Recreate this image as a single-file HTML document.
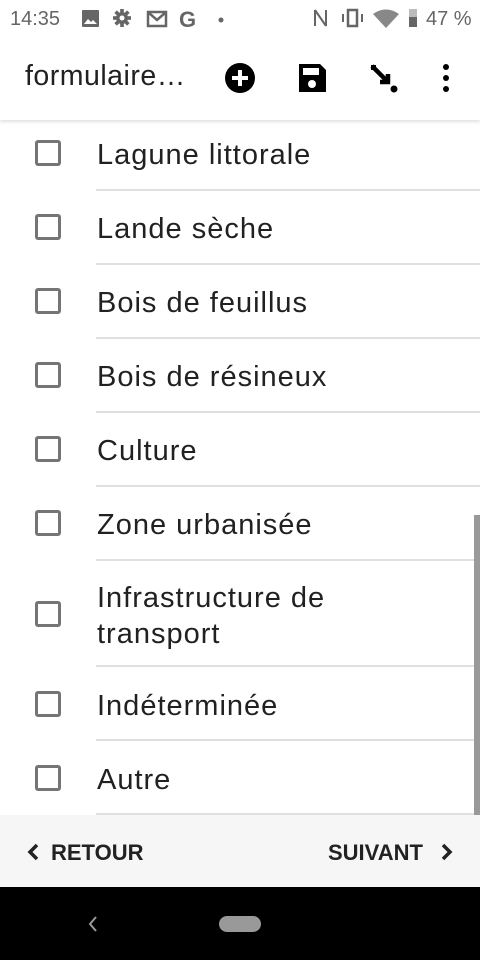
<!DOCTYPE html>
<html><head><meta charset="utf-8"><style>
*{margin:0;padding:0;box-sizing:border-box}
body{width:480px;height:960px;overflow:hidden;background:#fff;font-family:"Liberation Sans",Roboto,sans-serif;position:relative}
.sb{position:absolute;top:0;left:0;width:480px;height:38px;color:#666;font-size:20px}
.tb{position:absolute;top:38px;left:0;width:480px;height:82px;background:#fff;box-shadow:0 2px 3px rgba(0,0,0,.12);z-index:2}
.title{position:absolute;left:25px;top:22px;font-size:28.5px;color:#212121;letter-spacing:0.5px}
.cb{position:absolute;left:35px;width:26px;height:26px;border:3px solid #757575;border-radius:3px}
.txt{position:absolute;left:97px;font-size:29px;color:#212121;line-height:36px;white-space:nowrap;letter-spacing:1px}
.div{position:absolute;left:96px;right:0;height:2px;background:#e0e0e0}
.bot{position:absolute;top:815px;left:0;width:480px;height:72px;background:#f6f6f6;font-weight:bold;font-size:22px;color:#222}
.nav{position:absolute;top:887px;left:0;width:480px;height:73px;background:#000}
</style></head><body>
<div class="sb">
<span style="position:absolute;left:10px;top:8px">14:35</span>
<svg style="position:absolute;left:80px;top:9px" width="150" height="20">
<rect x="2" y="1" width="17" height="17" rx="1" fill="#666"/><path d="M4 15l4-5 3 3 2-2 4 4z" fill="#fff"/>
<g transform="translate(42,9)" fill="#666"><circle r="6"/><rect x="-1.8" y="-9" width="3.6" height="18"/><rect x="-9" y="-1.8" width="18" height="3.6"/><rect x="-1.8" y="-9" width="3.6" height="18" transform="rotate(45)"/><rect x="-1.8" y="-9" width="3.6" height="18" transform="rotate(-45)"/><circle r="2.5" fill="#fff"/></g>
<rect x="68" y="3" width="18" height="14" fill="none" stroke="#666" stroke-width="2.5"/><path d="M69 4l8 7 8-7" fill="none" stroke="#666" stroke-width="2.5"/>
<text x="99" y="18" font-size="22" font-weight="bold" fill="#666" font-family="Liberation Sans">G</text>
<circle cx="141" cy="11" r="2.5" fill="#666"/>
</svg>
<svg style="position:absolute;left:310px;top:6px" width="110" height="24">
<path d="M5 4v16M5 4l11 16M16 4v16" stroke="#666" stroke-width="2" fill="none"/>
<rect x="38" y="4" width="9" height="16" fill="none" stroke="#666" stroke-width="2.5"/><rect x="32" y="8" width="2" height="8" fill="#666"/><rect x="51" y="8" width="2" height="8" fill="#666"/>
<path d="M63 8q13-9 26 0l-13 14z" fill="#888"/>
<rect x="99" y="3" width="8" height="18" fill="#bbb"/><rect x="99" y="11" width="8" height="10" fill="#666"/>
</svg>
<span style="position:absolute;left:426px;top:8px">47 %</span>
</div>
<div class="tb">
<div class="title">formulaire…</div>
<svg style="position:absolute;left:222px;top:22px" width="240" height="36">
<circle cx="18" cy="18" r="15" fill="#000"/><path d="M18 10v16M10 18h16" stroke="#fff" stroke-width="4"/>
<path d="M77 4h21l6 6v22h-27z" fill="#000"/><rect x="81" y="8" width="16" height="7" fill="#fff"/><circle cx="90" cy="24" r="4" fill="#fff"/>
<path d="M150 6l14 14M158 22h8v-8" stroke="#000" stroke-width="4.5" fill="none"/><rect x="149" y="5" width="5" height="5" fill="#000"/><circle cx="172" cy="29" r="3.5" fill="#000"/>
<circle cx="224" cy="7" r="3" fill="#000"/><circle cx="224" cy="18" r="3" fill="#000"/><circle cx="224" cy="29" r="3" fill="#000"/>
</svg>
</div>

<div class="cb" style="top:140px"></div><div class="txt" style="top:137px">Lagune littorale</div><div class="div" style="top:189px"></div>
<div class="cb" style="top:214px"></div><div class="txt" style="top:211px">Lande sèche</div><div class="div" style="top:263px"></div>
<div class="cb" style="top:288px"></div><div class="txt" style="top:285px">Bois de feuillus</div><div class="div" style="top:337px"></div>
<div class="cb" style="top:362px"></div><div class="txt" style="top:359px">Bois de résineux</div><div class="div" style="top:411px"></div>
<div class="cb" style="top:436px"></div><div class="txt" style="top:433px">Culture</div><div class="div" style="top:485px"></div>
<div class="cb" style="top:510px"></div><div class="txt" style="top:507px">Zone urbanisée</div><div class="div" style="top:559px"></div>
<div class="cb" style="top:601px"></div><div class="txt" style="top:580px">Infrastructure de<br>transport</div><div class="div" style="top:665px"></div>
<div class="cb" style="top:691px"></div><div class="txt" style="top:688px">Indéterminée</div><div class="div" style="top:739px"></div>
<div class="cb" style="top:765px"></div><div class="txt" style="top:762px">Autre</div><div class="div" style="top:813px"></div>
<div style="position:absolute;left:474px;top:515px;width:6px;height:300px;background:#999"></div>

<div class="bot">
<svg style="position:absolute;left:26px;top:27px" width="14" height="20"><path d="M11 3L4 10l7 7" stroke="#222" stroke-width="3.5" fill="none"/></svg>
<span style="position:absolute;left:51px;top:25px">RETOUR</span>
<span style="position:absolute;left:328px;top:25px">SUIVANT</span>
<svg style="position:absolute;left:440px;top:27px" width="14" height="20"><path d="M3 3l7 7-7 7" stroke="#222" stroke-width="3.5" fill="none"/></svg>
</div>
<div class="nav">
<svg style="position:absolute;left:86px;top:28px" width="14" height="18"><path d="M10 2L4 9l6 7" stroke="#999" stroke-width="2" fill="none"/></svg>
<div style="position:absolute;left:219px;top:29px;width:42px;height:16px;border-radius:8px;background:#999"></div>
</div>
</body></html>
